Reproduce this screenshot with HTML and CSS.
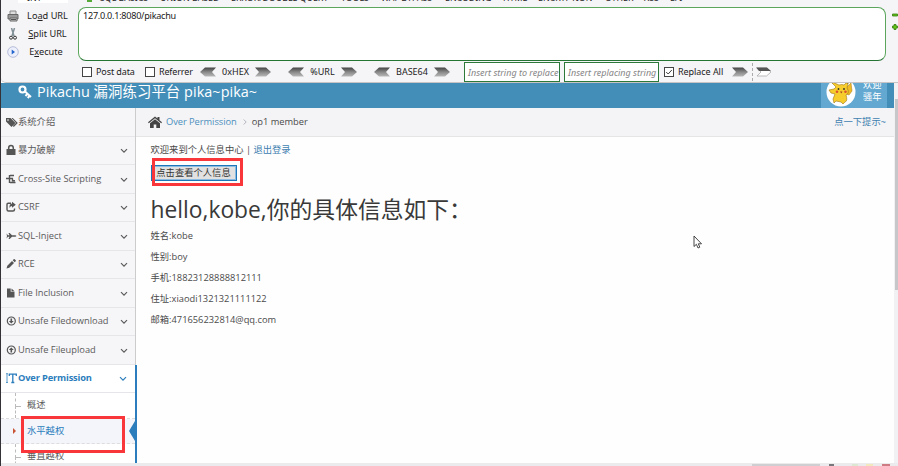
FILE: index.html
```html
<!DOCTYPE html>
<html lang="zh-CN">
<head>
<meta charset="utf-8">
<title>Pikachu</title>
<link rel="stylesheet" href="styles.css">
</head>
<body>
<svg class="defs" width="0" height="0">
  <defs>
    <linearGradient id="metal" x1="0" y1="0" x2="0" y2="1"><stop offset="0" stop-color="#444"/><stop offset=".5" stop-color="#888"/><stop offset="1" stop-color="#b8b8b8"/></linearGradient>
    <symbol id="arr" viewBox="0 0 16 10"><path d="M0 .5h11l5 4.500-5 4.500H0L4 5z" fill="url(#metal)"/></symbol>
    <symbol id="arl" viewBox="0 0 16 10"><path d="M16 .5H5L0 5l5 4.500h11L12 5z" fill="url(#metal)"/></symbol>
    <symbol id="chev" viewBox="0 0 8 6"><path d="M1 1.200l3 3 3-3" fill="none" stroke="currentColor" stroke-width="1.200"/></symbol>
  </defs>
</svg>
<section class="hackbar">
  <nav class="menus"><span class="select">INT</span><i class="go"></i><span class="m1">SQL BASICS</span><span class="m2">UNION BASED</span><span class="m3">ERROR/DOUBLE QUERY</span><span class="m4">TOOLS</span><span class="m5">WAF BYPASS</span><span class="m6">ENCODING</span><span class="m7">HTML</span><span class="m8">ENCRYPTION</span><span class="m9">OTHER</span><span class="m10">XSS</span><span class="m11">LFI</span></nav>
  <div class="main">
    <div class="actions">
      <div class="action"><svg viewBox="0 0 12 12"><path d="M3 1h6v4H3z" fill="#ddd" stroke="#888"/><path d="M1 4.500h10V9H1z" fill="#999" stroke="#666"/><path d="M3 8h7v3H3z" fill="#ccc" stroke="#666"/><path d="M4 9.500h5" stroke="#555"/></svg><span>Lo<u>a</u>d URL</span></div>
      <div class="action"><svg viewBox="0 0 12 12"><path d="M4.500 0l2.500 8M7.500 0L5 8" stroke="#829098" stroke-width="1.500"/><circle cx="4" cy="9.700" r="1.500" fill="none" stroke="#333"/><circle cx="8" cy="9.700" r="1.500" fill="none" stroke="#333"/></svg><span><u>S</u>plit URL</span></div>
      <div class="action"><svg viewBox="0 0 12 12"><circle cx="6" cy="6" r="5.300" fill="#edf0fb" stroke="#a5afd0" stroke-width=".8"/><path d="M4.700 3.500L8 6 4.700 8.500z" fill="#2466ce"/></svg><span class="exec">E<u>x</u>ecute</span></div>
    </div>
    <div class="url">127.0.0.1:8080/pikachu</div>
    <div class="resize"><svg viewBox="0 0 6 18"><path d="M.5 1h5v2h-5zM2 11.500h2v1.500h1.500v2H4v1.500H2V15H.5v-2H2z" fill="#62c31b" stroke="#367b0a" stroke-width=".8"/></svg></div>
  </div>
  <div class="tools">
    <i class="check"></i><span class="post">Post data</span><i class="check"></i><span class="ref">Referrer</span>
    <svg class="ar"><use href="#arl"/></svg><span class="hex">0xHEX</span><svg class="ar"><use href="#arr"/></svg>
    <svg class="ar gap"><use href="#arl"/></svg><span class="pct">%URL</span><svg class="ar"><use href="#arr"/></svg>
    <svg class="ar gap"><use href="#arl"/></svg><span class="b64">BASE64</span><svg class="ar"><use href="#arr"/></svg>
    <div class="field f1">Insert string to replace</div><div class="field">Insert replacing string</div>
    <i class="check ticked"><svg viewBox="0 0 10 10"><path d="M1.500 5l2.500 2.500 4.500-5" fill="none" stroke="#333" stroke-width="1.200"/></svg></i><span class="all">Replace All</span>
    <svg class="ar"><use href="#arr"/></svg><i class="dash"></i><svg class="ar" viewBox="0 0 16 10"><path d="M1 1h9.500L15 5l-4.500 4H1l4-4z" fill="#fff" stroke="#aaa" stroke-width=".8"/><path d="M0 .5h11l4 3.500H3z" fill="#555"/></svg>
  </div>
</section>
<div class="page">
  <div class="view">
    <header class="top">
      <svg class="key" viewBox="0 0 14 14"><circle cx="4.500" cy="4.500" r="3" fill="none" stroke="#fff" stroke-width="2.200"/><path d="M7 6.500l6 5.500M9.300 9l-1.800 2M11.500 11l-1.800 2" stroke="#fff" stroke-width="1.900"/></svg>
      <h2>Pikachu 漏洞练习平台 pika~pika~</h2>
      <div class="user">
        <svg class="avatar" viewBox="0 0 30 30"><circle cx="15" cy="15" r="14.500" fill="#fff"/><path d="M20 17l2-4-2-2 5-5 1 8-3 4z" fill="#f0bb24" stroke="#a17916" stroke-width=".5"/><path d="M10 10L4 4l9 4q3-1 5 0l5-5-2 8q3 5-1 7 2 6-1 7l-2 2-2-2-5-1-2 2-1-4 2-5-4-1-2-3 5-1z" fill="#f7cc2d" stroke="#9c7418" stroke-width=".6"/><path d="M4 4l3 1.200-.5 1.300zM23 3l-3 3 2 .5z" fill="#40351f"/><circle cx="12.500" cy="12" r=".9" fill="#332"/><circle cx="18" cy="12" r=".9" fill="#332"/><circle cx="11" cy="14.800" r="1.300" fill="#dc5330"/><circle cx="19.500" cy="14.800" r="1.300" fill="#dc5330"/><path d="M14 14.500h2.500l-1.200 2z" fill="#a84022"/></svg>
        <div class="hi"><span>欢迎</span><span>骚年</span></div>
      </div>
    </header>
    <div class="body">
      <aside class="side">
        <div class="item"><svg viewBox="0 0 12 12"><path d="M0 2h4.500l5 5-4 4L0 5.500zM5.500 2h1.300l5 5-4 4-.9-.9L10 7z" fill="#555"/><circle cx="2" cy="4" r=".8" fill="#fff"/></svg><span>系统介绍</span></div>
        <div class="item"><svg viewBox="0 0 12 12"><path d="M.5 5h9v6h-9z" fill="#555"/><path d="M2.700 5.500V4q0-2.500 2.300-2.500T7.300 4v1.500" fill="none" stroke="#555" stroke-width="1.500"/></svg><span>暴力破解</span><svg class="c"><use href="#chev"/></svg></div>
        <div class="item"><svg viewBox="0 0 12 12"><path d="M0 5.500h4M3.500 2v8M4 2.500h4M4 5.500h3M4 9.500h5.500M6.500 5.500v2.200h2.500" fill="none" stroke="#555" stroke-width="1.400"/></svg><span class="xss">Cross-Site Scripting</span><svg class="c"><use href="#chev"/></svg></div>
        <div class="item"><svg viewBox="0 0 12 12"><path d="M5 2.200H2.200Q1 2.200 1 3.500v5q0 1.500 1.500 1.500h4.500q1.500 0 1.500-1.500V7.500" fill="none" stroke="#555" stroke-width="1.400"/><path d="M6 .8l3.800 3L6 6.800V5Q4.300 5 3.500 7 3 3 6 2.600z" fill="#555"/></svg><span>CSRF</span><svg class="c"><use href="#chev"/></svg></div>
        <div class="item"><svg viewBox="0 0 12 12"><path d="M.5 3.500L2 5.200h1.500L2.500 3h1.200L6 5.200h3.500l1 .8-1 .8H6L3.700 9H2.500l1-2.200H2L.5 8.500 1 6z" fill="#555"/></svg><span>SQL-Inject</span><svg class="c"><use href="#chev"/></svg></div>
        <div class="item"><svg viewBox="0 0 12 12"><path d="M.5 10.500l.8-2.800 4.700-4.700 2 2-4.700 4.700zM6.700 2.300l1-1q.5-.5 1 0l1 1q.5.500 0 1l-1 1z" fill="#555"/></svg><span>RCE</span><svg class="c"><use href="#chev"/></svg></div>
        <div class="item"><svg viewBox="0 0 12 12"><path d="M1 1.500h3.700v3.300H8.500v5.700H1zM5.500 1.500l3 2.700h-3z" fill="#555"/></svg><span>File Inclusion</span><svg class="c"><use href="#chev"/></svg></div>
        <div class="item"><svg viewBox="0 0 12 12"><circle cx="5.300" cy="6" r="4" fill="none" stroke="#555" stroke-width="1.200"/><path d="M4.500 3.500h1.600V6h1.700L5.300 8.600 2.800 6h1.700z" fill="#555"/></svg><span>Unsafe Filedownload</span><svg class="c"><use href="#chev"/></svg></div>
        <div class="item"><svg viewBox="0 0 12 12"><circle cx="5.300" cy="6" r="4" fill="none" stroke="#555" stroke-width="1.200"/><path d="M4.500 8.500h1.600V6h1.700L5.300 3.400 2.800 6h1.700z" fill="#555"/></svg><span>Unsafe Fileupload</span><svg class="c"><use href="#chev"/></svg></div>
        <div class="open">
          <div class="item active"><svg viewBox="0 0 12 12"><path d="M0 1.700h2M0 10.500h2M1 2v8" fill="none" stroke="#2b7dbc" stroke-width=".8"/><path d="M3.300 4V2.200h7V4M6.800 2.200v8.300M5.300 10.500h3" fill="none" stroke="#2b7dbc" stroke-width="1.300"/></svg><span>Over Permission</span><svg class="c"><use href="#chev"/></svg></div>
          <div class="sub"><span>概述</span></div>
          <div class="sub current"><span>水平越权</span></div>
          <div class="sub"><span>垂直越权</span></div>
          <div class="mark nav-mark"></div>
        </div>
      </aside>
      <main>
        <div class="crumbs"><svg class="home" viewBox="0 0 14 12"><path d="M0 6.300L7 .5l2.500 2V1h2v3.200L14 6.300l-.8 1L7 2.200.8 7.300z" fill="#444"/><path d="M2 7.200l5-4 5 4V12H8.300V8.500H5.700V12H2z" fill="#444"/></svg><a>Over Permission</a><svg class="sep" viewBox="0 0 4 8"><path d="M.7 1.500L3.200 4 .7 6.500" fill="none" stroke="#b2b6bf"/></svg><span>op1 member</span><a class="tip">点一下提示~</a></div>
        <div class="content">
          <p class="welcome">欢迎来到个人信息中心 | <a>退出登录</a></p>
          <div class="btnrow"><button>点击查看个人信息</button><div class="mark btn-mark"></div></div>
          <h1>hello,kobe,你的具体信息如下：</h1>
          <p>姓名:kobe</p><p>性别:boy</p><p>手机:18823128888812111</p><p>住址:xiaodi1321321111122</p><p>邮箱:471656232814@qq.com</p>
        </div>
      </main>
    </div>
  </div>
  <div class="scroll"><i></i></div>
</div>
<footer class="status"><i class="bar"></i><i class="s1"></i><i class="s2"></i><i class="s3"></i><i class="s4"></i></footer>
<svg class="cursor" viewBox="0 0 10 14"><path d="M1 1v10.500l2.400-2.200L5 13l1.800-.8-1.500-3.400h3.200z" fill="#fff" stroke="#333" stroke-width=".9"/></svg>
</body>
</html>
```
FILE: styles.css
```css
* { box-sizing: border-box; }
body { margin: 0; width: 898px; height: 466px; overflow: hidden; border-left: 1px solid #343137; background: #fefefe; color: #4a4a4a; font: 9.3px/14px "Open Sans", "Noto Sans CJK SC", sans-serif; display: flex; flex-direction: column; position: relative; }
svg { flex: none; display: block; }
.defs { position: absolute; }
span, a { white-space: nowrap; }
p, h1, h2 { margin: 0; font-weight: 400; }
a { color: #3f7fb0; }

.hackbar { height: 83px; flex: none; background: #f5f4f7; border-bottom: 1px solid #c9c4c4; border-bottom-left-radius: 5px; color: #222; font-family: "Noto Sans", sans-serif; display: flex; flex-direction: column; }
.menus { height: 7px; display: flex; font-size: 8.8px; line-height: 14px; overflow: hidden; }
.menus span { margin-top: -9px; height: 14px; flex: none; }
.menus .select { width: 50px; margin-left: 17px; height: 12px; background: #fff; padding-left: 9px; }
.go { width: 5px; height: 2px; background: #55aa38; margin: 0 0 0 19px; }
.m1 { width: 60px; margin-left: 8px; }
.m2 { width: 71px; }
.m3 { width: 110px; }
.m4 { width: 40px; }
.m5 { width: 64px; }
.m6 { width: 58px; }
.m7 { width: 35px; }
.m8 { width: 67px; }
.m9 { width: 39px; }
.m10 { width: 26px; }
.main { display: flex; height: 54px; }
.actions { width: 77px; }
.action { display: flex; align-items: center; height: 18px; font-size: 9.2px; padding-left: 6px; }
.action svg { width: 12px; height: 12px; }
.action span { width: 57px; text-align: center; }
.action .exec { width: 54px; }
.url { width: 808px; border: 1px solid #5ba65c; border-bottom-color: #257434; border-radius: 8px; background: #fff; padding: 1px 4px; font-size: 9.1px; line-height: 13px; letter-spacing: -.26px; }
.resize { margin: 6px 0 0 6px; }
.resize svg { width: 6px; height: 18px; }
.tools { height: 20px; margin-top: 1px; display: flex; align-items: center; padding-left: 81px; font-size: 9px; }
.tools > * { flex: none; }
.check { width: 10px; height: 10px; border: 1px solid #444; background: #fff; }
.post, .ref { padding-left: 4px; }
.post { width: 53px; letter-spacing: -.1px; }
.ref { width: 45px; letter-spacing: -.15px; }
.ar { width: 16px; height: 10px; }
.gap { margin-left: 17px; }
.hex, .pct, .b64 { text-align: center; }
.hex { width: 39px; }
.pct { width: 37px; }
.b64 { width: 44px; }
.field { width: 95px; height: 20px; border: 1px solid #2c793a; background: #fff; color: #858585; font-style: italic; line-height: 19px; padding-left: 3px; overflow: hidden; white-space: nowrap; }
.f1 { width: 96px; margin: 0 4px 0 14px; }
.ticked { margin-left: 5px; }
.ticked svg { width: 8px; height: 8px; }
.all { width: 58px; padding-left: 4px; letter-spacing: -.05px; }
.dash { height: 18px; border-left: 1px dashed #aaa; margin: 0 3px 0 4px; }

.page { height: 380px; display: flex; }
.view { width: 893px; display: flex; flex-direction: column; overflow: hidden; }
.top { height: 25px; background: #438eb9; display: flex; flex: none; width: 893px; position: relative; color: #fff; }
.key { width: 14px; height: 14px; margin: 2px 5px 0 17px; }
.top h2 { font-size: 14.400px; line-height: 17px; letter-spacing: .06px; }
.user { margin-left: auto; margin-right: 7px; width: 66px; height: 25px; background: #62a8d1; display: flex; overflow: hidden; }
.avatar { width: 30px; height: 30px; margin: -6px 7px 0 5px; }
.hi { font-size: 9.3px; line-height: 12px; margin-top: -4px; display: flex; flex-direction: column; }
.body { flex: 1; display: flex; min-height: 0; }
.side { width: 135px; flex: none; background: #f6f5f8; border-right: 1px solid #ccc; color: #5b5b5b; }
.item { height: 28.5px; display: flex; align-items: center; padding-left: 5px; border-bottom: 1px solid #e6e5e9; }
.item > svg:first-child { width: 12px; height: 12px; }
.item .c { width: 8px; height: 6px; margin: 2px 7px 0 auto; }
.open { background: #fff; width: 136px; height: 100px; position: relative; border-right: 2px solid #2b7dbc; }
.active { color: #2b7dbc; font-weight: 700; padding-right: 1px; letter-spacing: -.17px; }
.sub { height: 25.500px; padding-left: 26px; line-height: 23px; border-bottom: 1px dashed #ddd; position: relative; }
.sub::before { content: ""; position: absolute; left: 14px; top: 0; width: 5px; height: 13px; border-left: 1px dashed #bbb; border-bottom: 1px dashed #bbb; }
.sub::after { content: ""; position: absolute; left: 14px; top: 13px; height: 12px; border-left: 1px dashed #bbb; }
.current { background: #f4f5fb; color: #2b7dbc; }
.current::before { left: 12px; top: 9px; width: 0; height: 0; border: solid transparent; border-width: 3px 0 3px 3px; border-left-color: #c85335; }
.current::after { left: auto; right: 0; top: 2px; height: 0; border: solid transparent; border-width: 10px 6px 10px 0; border-right-color: #2b7dbc; }
.mark { position: absolute; border: 3px solid #f9373b; }
.nav-mark { left: 20px; top: 51px; width: 104px; height: 37px; }
main { flex: 1; min-width: 0; }
.crumbs { height: 29px; background: #f4f4f6; border-bottom: 1px solid #e5e5e8; display: flex; align-items: center; padding: 0 8px 0 12px; }
.home { width: 14px; height: 12px; margin-right: 4px; }
.crumbs a:not(.tip) { color: #4c8fbd; letter-spacing: -.05px; }
.sep { width: 4px; height: 8px; margin: 0 5px 0 6px; }
.tip { margin-left: auto; }
.content { padding: 6px 0 0 14.5px; }
.btnrow { position: relative; height: 29px; padding-top: 8px; }
.btnrow button { display: block; width: 86px; height: 16px; padding: 0; border: 1px solid #1c76b8; outline: 1px solid #8bbbe0; outline-offset: -2px; background: #e1e1e1; color: #333; font: 9.3px/14px "Open Sans", "Noto Sans CJK SC", sans-serif; white-space: nowrap; }
.btn-mark { left: 1.5px; top: 1px; width: 91px; height: 28px; }
.content h1 { font-size: 22.800px; line-height: 30px; margin: 9px 0 3.500px; color: #393939; white-space: nowrap; }
.content h1 ~ p { height: 21px; line-height: 14px; }
.scroll { flex: 1; background: #f1f1f3; padding-top: 16px; }
.scroll i { display: block; height: 191px; background: #c7c7c9; margin-left: 1px; }
.status { height: 3px; background: #ebebed; display: flex; }
.status i { height: 2px; margin-top: 1px; }
.bar { width: 68px; margin-left: 751px; background: #cfcfd1; }
.s1 { width: 5px; margin-left: 9px; background: #77777c; }
.s2 { width: 6px; margin-left: 18px; background: #dce8d2; }
.s3 { width: 7px; margin-left: 8px; background: #f3e7bd; }
.s4 { width: 8px; margin-left: 9px; background: #cf7b84; }
.cursor { position: absolute; left: 692px; top: 235px; width: 10px; height: 14px; }
```
